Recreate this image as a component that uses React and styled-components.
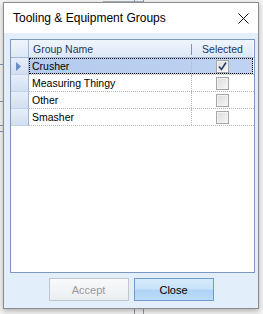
import React from "react";
import styled, { createGlobalStyle } from "styled-components";

const Global = createGlobalStyle`
  html, body { margin: 0; padding: 0; }
  body { background: #f0f0f0; overflow: hidden; }
`;

const Page = styled.div`
  width: 263px;
  height: 314px;
  position: relative;
  background: #f3f3f3;
  overflow: hidden;
`;

const BackLine = styled.div`
  position: absolute;
  left: ${(p) => p.$x}px;
  top: ${(p) => p.$y}px;
  width: ${(p) => p.$w}px;
  height: ${(p) => p.$h}px;
  background: ${(p) => p.$c || "#8a9bb0"};
`;

const Window = styled.div`
  position: absolute;
  left: 3px;
  top: 2px;
  width: 254px;
  height: 305px;
  border: 1px solid #8c8c8c;
  box-shadow: 0 2px 5px rgba(0, 0, 0, 0.28);
  display: flex;
  flex-direction: column;
  background: #e3eefb;
`;

const TitleBar = styled.div`
  height: 30px;
  flex: none;
  background: #ffffff;
  display: flex;
  align-items: center;
  justify-content: space-between;
  padding: 0 8px 0 9px;
  font-family: "Liberation Sans", Arial, sans-serif;
  font-size: 12px;
  color: #000;
`;

const Title = styled.span`
  padding-bottom: 1px;
`;

const CloseX = styled.svg`
  width: 11px;
  height: 11px;
  margin-right: 1px;
`;

const Body = styled.div`
  flex: 1;
  display: flex;
  flex-direction: column;
  padding: 6px 3px 7px 6px;
`;

const Grid = styled.div`
  width: 243px;
  height: 232px;
  flex: none;
  border: 1px solid #7d98c0;
  background: #ffffff;
  display: flex;
  flex-direction: column;
  font-family: "Liberation Sans", Arial, sans-serif;
  font-size: 10.5px;
`;

const Row = styled.div`
  display: grid;
  grid-template-columns: 18px 163px 61px;
  height: ${(p) => (p.$header ? 17 : 16)}px;
  border-bottom: 1px ${(p) => (p.$header ? "solid #9fb6d6" : "dotted #b8b8b8")};
`;

const HeaderCell = styled.div`
  background: linear-gradient(#f0f5fc, #dce8f6);
  color: #1e395b;
  display: flex;
  align-items: center;
  justify-content: ${(p) => (p.$center ? "center" : "flex-start")};
  padding-left: ${(p) => (p.$center ? 0 : 4)}px;
  position: relative;
  border-right: ${(p) => (p.$corner ? "1px solid #9fb6d6" : "none")};
  ${(p) =>
    p.$divider &&
    `&::before{content:"";position:absolute;left:-1px;top:4px;bottom:2px;width:1px;background:#7d98c0;}`}
`;

const RowHead = styled.div`
  background: linear-gradient(#e6eef9, #d2dff1);
  border-right: 1px solid #9fb6d6;
  border-bottom: 1px solid #c3d3ea;
  margin-bottom: -1px;
  display: flex;
  align-items: center;
  padding-left: 5px;
`;

const Pointer = styled.svg`
  width: 5px;
  height: 9px;
`;

const Cells = styled.div`
  grid-column: 2 / 4;
  display: grid;
  grid-template-columns: 163px 61px;
  background: ${(p) => (p.$selected ? "linear-gradient(90deg, #b5cbee, #bed3f1)" : "#fff")};
  outline: ${(p) => (p.$selected ? "1px dotted #000" : "none")};
  outline-offset: -1px;
`;

const NameCell = styled.div`
  display: flex;
  align-items: center;
  padding-left: 3px;
  color: #000;
  border-right: 1px dotted #b8b8b8;
`;

const CheckCell = styled.div`
  display: flex;
  align-items: center;
  justify-content: center;
`;

const Box = styled.div`
  width: 11px;
  height: 11px;
  border: 1px solid #a5a5a5;
  background: linear-gradient(135deg, #dcdcdc, #f6f6f6);
  box-shadow: inset 0 0 0 1px #f4f4f4;
  display: flex;
  align-items: center;
  justify-content: center;
`;

const Buttons = styled.div`
  display: flex;
  justify-content: center;
  gap: 5px;
  margin-top: 5px;
  padding-right: 3px;
`;

const Button = styled.div`
  width: 78px;
  height: 21px;
  border: 1px solid ${(p) => (p.$disabled ? "#bfc6ce" : "#6f9ccb")};
  background: ${(p) =>
    p.$disabled
      ? "linear-gradient(#f7f9fb, #eceff2)"
      : "linear-gradient(#d6eafc 0%, #c9e2fa 48%, #aed3f6 52%, #bcdcf8 100%)"};
  color: ${(p) => (p.$disabled ? "#9a9a9a" : "#000")};
  font-family: "Liberation Sans", Arial, sans-serif;
  font-size: 11px;
  display: flex;
  align-items: center;
  justify-content: center;
`;

const rows = [
  { name: "Crusher", checked: true },
  { name: "Measuring Thingy", checked: false },
  { name: "Other", checked: false },
  { name: "Smasher", checked: false },
];

export default function App() {
  return (
    <>
      <Global />
      <Page>
        <BackLine $x={0} $y={64} $w={3} $h={1} />
        <BackLine $x={0} $y={101} $w={3} $h={1} />
        <BackLine $x={0} $y={125} $w={3} $h={1} />
        <BackLine $x={0} $y={131} $w={3} $h={1} />
        <BackLine $x={103} $y={1} $w={40} $h={1} $c="#a8b4c4" />
        <BackLine $x={134} $y={0} $w={1} $h={2} />
        <BackLine $x={143} $y={0} $w={1} $h={2} />
        <BackLine $x={134} $y={309} $w={1} $h={5} />
        <BackLine $x={143} $y={309} $w={1} $h={5} />
        <Window>
          <TitleBar>
            <Title>Tooling &amp; Equipment Groups</Title>
            <CloseX viewBox="0 0 11 11">
              <path d="M0.5 0.5 L10.5 10.5 M10.5 0.5 L0.5 10.5" stroke="#111" strokeWidth="1" fill="none" />
            </CloseX>
          </TitleBar>
          <Body>
            <Grid>
              <Row $header>
                <HeaderCell $corner />
                <HeaderCell>Group Name</HeaderCell>
                <HeaderCell $center $divider>Selected</HeaderCell>
              </Row>
              {rows.map((r, i) => (
                <Row key={r.name}>
                  <RowHead>
                    {i === 0 && (
                      <Pointer viewBox="0 0 5 9">
                        <path d="M0 0 L5 4.5 L0 9 Z" fill="#6b8fc4" />
                      </Pointer>
                    )}
                  </RowHead>
                  <Cells $selected={i === 0}>
                    <NameCell>{r.name}</NameCell>
                    <CheckCell>
                      <Box>
                        {r.checked && (
                          <svg width="9" height="9" viewBox="0 0 9 9">
                            <path d="M1 4.5 L3.5 7.5 L8 0.5" stroke="#2b3f66" strokeWidth="1.6" fill="none" />
                          </svg>
                        )}
                      </Box>
                    </CheckCell>
                  </Cells>
                </Row>
              ))}
            </Grid>
            <Buttons>
              <Button $disabled>Accept</Button>
              <Button>Close</Button>
            </Buttons>
          </Body>
        </Window>
      </Page>
    </>
  );
}
